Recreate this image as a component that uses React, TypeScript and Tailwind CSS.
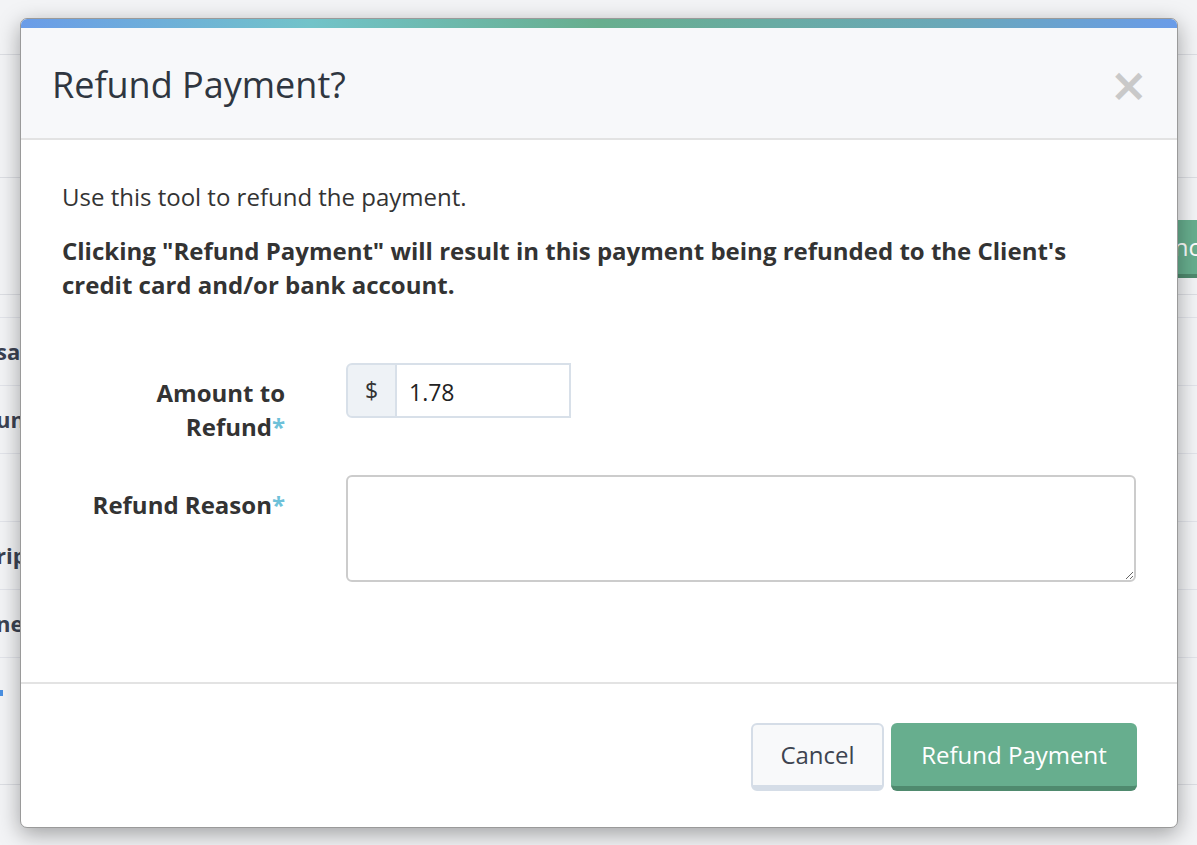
import React from "react";

const font = { fontFamily: '"Open Sans", "Noto Sans", sans-serif' };

function BgRow({ left, h = "h-[68px]" }: { left?: React.ReactNode; h?: string }) {
  return (
    <div className={`flex items-center justify-between border-b border-[#e2e4ea] ${h}`}>
      <div className="text-[22px] font-bold text-[#3b4252] -ml-[4px]">{left}</div>
    </div>
  );
}

export default function App() {
  return (
    <div className="relative w-[1197px] h-[845px] overflow-hidden bg-[#f3f4f6]" style={font}>
      {/* background page */}
      <div className="flex flex-col">
        <div className="h-[55px] border-b border-[#dcdee3]" />
        <div className="h-[123px] border-b border-[#dcdee3]" />
        <div className="h-[117px] flex items-start justify-end pt-[42px] border-b border-[#dcdee3]">
          <div className="h-[58px] w-[130px] -mr-[8px] rounded-[4px] bg-[#67ae8e] border-b-4 border-[#4f8a6e] flex items-center justify-end pr-[5px] text-[24px] text-white">
            Sync
          </div>
        </div>
        <div className="h-[23px] border-b border-[#e2e4ea]" />
        <BgRow left="sa" />
        <BgRow left="un" />
        <BgRow left="" />
        <BgRow left="rip" />
        <BgRow left="ne" />
        <div className="h-[127px] border-b border-[#dcdee3] pt-[32px]">
          <div className="w-[3px] h-[6px] bg-[#4a90e2]" />
        </div>
      </div>

      {/* modal */}
      <div className="absolute left-[20px] top-[18px] w-[1158px] h-[810px] flex flex-col rounded-[7px] bg-white overflow-hidden border border-[#9a9a9a] shadow-[0_6px_22px_rgba(0,0,0,0.35)]">
        <div className="h-[9px] shrink-0 bg-[linear-gradient(90deg,#6a9ce8_0%,#72c3c9_25%,#68ae8e_50%,#6aa8b8_80%,#6a9ce8_100%)]" />
        <div className="h-[112px] shrink-0 flex items-center justify-between bg-[#f7f8fa] border-b-2 border-[#e3e3e3] pl-[31px] pr-[29px]">
          <h1 className="text-[36px] font-normal text-[#2f3640] leading-none pt-[4px]">Refund Payment?</h1>
          <button className="text-[46px] font-bold text-[#c9c9c9] leading-none pt-[4px]" style={{ fontFamily: '"DejaVu Sans", sans-serif' }}>
            ×
          </button>
        </div>
        <div className="flex-1 flex flex-col pl-[41px] pr-[41px] pt-[40px] text-[#333]">
          <p className="text-[24px] leading-[34px]">Use this tool to refund the payment.</p>
          <p className="text-[24px] leading-[34px] font-bold mt-[20px]">
            Clicking "Refund Payment" will result in this payment being refunded to the Client's credit card and/or bank account.
          </p>
          <div className="mt-[61px] grid grid-cols-[223px_1fr] gap-x-[61px] gap-y-[31px]">
            <label className="text-right text-[24px] leading-[34px] font-bold text-[#333] pt-[13px]">
              Amount to Refund<span className="text-[#6ec1d9]">*</span>
            </label>
            <div className="flex h-[55px] w-[225px]">
              <span className="w-[51px] flex items-center justify-center bg-[#eef2f6] border-2 border-[#d8e0e9] rounded-l-[6px] text-[23px] text-[#333]">$</span>
              <input
                className="flex-1 min-w-0 border-2 border-l-0 border-[#d8e0e9] px-[12px] pt-[3px] text-[23px] text-[#222] outline-none"
                defaultValue="1.78"
                style={font}
              />
            </div>
            <label className="text-right text-[24px] leading-[34px] font-bold text-[#333] pt-[13px]">
              Refund Reason<span className="text-[#6ec1d9]">*</span>
            </label>
            <textarea className="h-[107px] w-full border-2 border-[#cccccc] rounded-[6px] outline-none resize-y" />
          </div>
        </div>
        <div className="h-[145px] shrink-0 border-t-2 border-[#e3e3e3] flex items-start justify-end gap-[7px] pr-[40px] pt-[39px]">
          <button className="h-[68px] w-[133px] rounded-[6px] bg-[#f8f9fa] border-2 border-b-[6px] border-[#d5dde7] text-[24px] text-[#3d4450]">
            Cancel
          </button>
          <button className="h-[68px] w-[246px] rounded-[6px] bg-[#67ae8e] border-b-[5px] border-[#4f8a6e] text-[24px] text-white">
            Refund Payment
          </button>
        </div>
      </div>
    </div>
  );
}
